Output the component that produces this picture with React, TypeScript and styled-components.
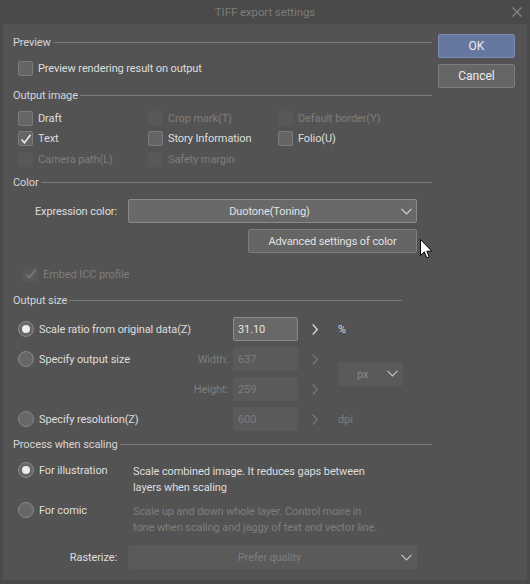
import React from 'react';
import styled, { createGlobalStyle } from 'styled-components';

const GlobalStyle = createGlobalStyle`
  html, body {
    margin: 0;
    padding: 0;
    background: #4a4a4a;
  }
  body {
    font-family: Roboto, 'Liberation Sans', Arial, sans-serif;
    font-size: 11px;
    letter-spacing: -0.1px;
    color: #dedede;
  }
`;

const Window = styled.div`
  width: 530px;
  height: 584px;
  background: #4a4a4a;
  display: flex;
  flex-direction: column;
  position: relative;
  overflow: hidden;
`;

const TitleBar = styled.div`
  height: 24px;
  flex-shrink: 0;
  display: flex;
  align-items: center;
  justify-content: center;
  position: relative;
  color: #7b7b7b;
  font-size: 11.5px;
`;

const CloseBtn = styled.div`
  position: absolute;
  right: 8px;
  top: 7px;
  width: 10px;
  height: 10px;
  display: flex;
`;

const Body = styled.div`
  margin: 0 3px 4px 3px;
  flex: 1;
  min-height: 0;
  background: #535353;
  display: flex;
  padding: 10px 12px 0 10px;
  gap: 6px;
`;

const Main = styled.div`
  width: 419px;
  display: flex;
  flex-direction: column;
`;

const Side = styled.div`
  display: flex;
  flex-direction: column;
  gap: 6px;
`;

const DialogButton = styled.button<{ primary?: boolean }>`
  width: 77px;
  height: 24px;
  border-radius: 2px;
  border: 1px solid ${(p) => (p.primary ? '#7c8cb4' : '#7c7c7c')};
  background: ${(p) => (p.primary ? '#6677a1' : '#666666')};
  color: #ececec;
  font-family: inherit;
  font-size: 12px;
  padding: 0;
`;

const SectionHeader = styled.div<{ lineEnd?: number }>`
  height: 16px;
  flex-shrink: 0;
  display: flex;
  align-items: center;
  color: #d6d6d6;
  width: ${(p) => p.lineEnd ?? 419}px;
  &::after {
    content: '';
    flex: 1;
    height: 1px;
    background: #7a7a7a;
    margin-left: 2px;
  }
`;

const Row = styled.div<{ top?: number }>`
  height: 20px;
  flex-shrink: 0;
  display: flex;
  align-items: center;
  margin-top: ${(p) => p.top ?? 0}px;
`;

const CheckGrid = styled.div`
  display: grid;
  grid-template-columns: 130px 130px 1fr;
  grid-template-rows: 20px 21px 20px;
  padding-left: 5px;
  margin-top: 5px;
`;

const CheckItem = styled.label<{ disabled?: boolean }>`
  display: flex;
  align-items: center;
  gap: 5px;
  color: ${(p) => (p.disabled ? '#7e7e7e' : '#dedede')};
  white-space: nowrap;
`;

const Box = styled.span<{ disabled?: boolean }>`
  width: 15px;
  height: 15px;
  box-sizing: border-box;
  border-radius: 2px;
  border: 1px solid ${(p) => (p.disabled ? '#585858' : '#7b7b7b')};
  background: ${(p) => (p.disabled ? '#585858' : '#656565')};
  display: flex;
  align-items: center;
  justify-content: center;
  flex-shrink: 0;
`;

const Radio = styled.span<{ checked?: boolean }>`
  width: 16px;
  height: 16px;
  box-sizing: border-box;
  border-radius: 50%;
  border: 1px solid #8a8a8a;
  background: #676767;
  display: flex;
  align-items: center;
  justify-content: center;
  flex-shrink: 0;
  &::after {
    content: '';
    display: ${(p) => (p.checked ? 'block' : 'none')};
    width: 8px;
    height: 8px;
    border-radius: 50%;
    background: #ececec;
  }
`;

const FieldRow = styled.div<{ top?: number }>`
  display: flex;
  flex-shrink: 0;
  align-items: center;
  height: 24px;
  margin-top: ${(p) => p.top ?? 0}px;
`;

const FieldLabel = styled.div`
  width: 104px;
  text-align: right;
  margin-right: 11px;
  color: #dedede;
`;

const Select = styled.div<{ disabled?: boolean; width: number }>`
  width: ${(p) => p.width}px;
  height: 24px;
  box-sizing: border-box;
  border-radius: 2px;
  border: 1px solid ${(p) => (p.disabled ? '#5a5a5a' : '#8a8a8a')};
  background: ${(p) => (p.disabled ? '#5a5a5a' : '#696969')};
  color: ${(p) => (p.disabled ? '#7e7e7e' : '#e2e2e2')};
  display: flex;
  align-items: center;
  position: relative;
`;

const SelectText = styled.span`
  flex: 1;
  text-align: center;
  padding-right: 6px;
`;

const SelectChevron = styled.span`
  position: absolute;
  right: 4px;
  top: 8px;
  display: flex;
`;

const PushButton = styled.div`
  width: 169px;
  height: 24px;
  flex-shrink: 0;
  box-sizing: border-box;
  border-radius: 2px;
  border: 1px solid #7e7e7e;
  background: #656565;
  color: #e2e2e2;
  display: flex;
  align-items: center;
  justify-content: center;
  margin: 6px 0 0 235px;
`;

const SizeGrid = styled.div`
  display: grid;
  grid-template-columns: 215px 65px 40px 80px;
  grid-template-rows: repeat(4, 30px);
  padding-left: 5px;
  margin-top: 6px;
  align-items: center;
`;

const RadioLabel = styled.div`
  display: flex;
  align-items: center;
  justify-content: space-between;
  padding-right: 5px;
`;

const RadioText = styled.span<{ disabled?: boolean }>`
  display: flex;
  align-items: center;
  gap: 5px;
  color: ${(p) => (p.disabled ? '#7e7e7e' : '#dedede')};
  white-space: nowrap;
`;

const DimLabel = styled.span`
  color: #7e7e7e;
`;

const NumInput = styled.div<{ disabled?: boolean }>`
  height: 24px;
  box-sizing: border-box;
  border-radius: 2px;
  border: 1px solid ${(p) => (p.disabled ? '#5a5a5a' : '#8a8a8a')};
  background: ${(p) => (p.disabled ? '#5a5a5a' : '#686868')};
  color: ${(p) => (p.disabled ? '#7e7e7e' : '#e2e2e2')};
  display: flex;
  align-items: center;
  padding-left: 4px;
`;

const Spin = styled.div`
  display: flex;
  padding-left: 14px;
`;

const Unit = styled.span<{ disabled?: boolean }>`
  color: ${(p) => (p.disabled ? '#7e7e7e' : '#dedede')};
`;

const UnitSelect = styled.div`
  grid-column: 4;
  grid-row: 2 / span 2;
  width: 65px;
  height: 24px;
  box-sizing: border-box;
  border-radius: 2px;
  background: #5a5a5a;
  color: #8a8a8a;
  display: flex;
  align-items: center;
  position: relative;
  padding-left: 19px;
`;

const ProcessGrid = styled.div`
  display: grid;
  grid-template-columns: 115px 1fr;
  row-gap: 7px;
  padding-left: 5px;
  margin-top: 10px;
`;

const Desc = styled.div<{ disabled?: boolean }>`
  line-height: 15.5px;
  color: ${(p) => (p.disabled ? '#7e7e7e' : '#dedede')};
  padding-top: 2px;
  width: 250px;
`;

const RadioTop = styled.div`
  display: flex;
  align-items: center;
  gap: 5px;
  height: 16px;
`;

const Cursor = styled.svg`
  position: absolute;
  left: 420px;
  top: 239px;
`;

const Check = ({ color }: { color: string }) => (
  <svg width="12" height="12" viewBox="0 0 12 12">
    <path d="M1.5 6.5 L4.5 9.8 L10.5 1.8" fill="none" stroke={color} strokeWidth="1.6" />
  </svg>
);

const ChevronDown = ({ color }: { color: string }) => (
  <svg width="11" height="7" viewBox="0 0 11 7">
    <path d="M0.5 0.8 L5.5 5.8 L10.5 0.8" fill="none" stroke={color} strokeWidth="1.2" />
  </svg>
);

const ChevronRight = ({ color }: { color: string }) => (
  <svg width="6" height="11" viewBox="0 0 6 11">
    <path d="M0.7 0.5 L5.3 5.5 L0.7 10.5" fill="none" stroke={color} strokeWidth="1.2" />
  </svg>
);

const CheckBox: React.FC<{ label: string; checked?: boolean; disabled?: boolean }> = ({
  label,
  checked,
  disabled,
}) => (
  <CheckItem disabled={disabled}>
    <Box disabled={disabled}>{checked && <Check color={disabled ? '#7a7a7a' : '#ececec'} />}</Box>
    {label}
  </CheckItem>
);

export default function App() {
  return (
    <Window>
      <GlobalStyle />
      <TitleBar>
        TIFF export settings
        <CloseBtn>
          <svg width="10" height="10" viewBox="0 0 10 10">
            <path d="M0.5 0.5 L9.5 9.5 M9.5 0.5 L0.5 9.5" stroke="#8a8a8a" strokeWidth="1.1" />
          </svg>
        </CloseBtn>
      </TitleBar>
      <Body>
        <Main>
          <SectionHeader>Preview</SectionHeader>
          <Row top={8} style={{ paddingLeft: 5 }}>
            <CheckBox label="Preview rendering result on output" />
          </Row>

          <SectionHeader style={{ marginTop: 9 }}>Output image</SectionHeader>
          <CheckGrid>
            <CheckBox label="Draft" />
            <CheckBox label="Crop mark(T)" disabled />
            <CheckBox label="Default border(Y)" disabled />
            <CheckBox label="Text" checked />
            <CheckBox label="Story Information" />
            <CheckBox label="Folio(U)" />
            <CheckBox label="Camera path(L)" disabled />
            <CheckBox label="Safety margin" disabled />
          </CheckGrid>

          <SectionHeader style={{ marginTop: 5 }}>Color</SectionHeader>
          <FieldRow top={9}>
            <FieldLabel>Expression color:</FieldLabel>
            <Select width={289}>
              <SelectText>Duotone(Toning)</SelectText>
              <SelectChevron>
                <ChevronDown color="#d4d4d4" />
              </SelectChevron>
            </Select>
          </FieldRow>
          <PushButton>Advanced settings of color</PushButton>
          <Row top={11} style={{ paddingLeft: 10 }}>
            <CheckBox label="Embed ICC profile" checked disabled />
          </Row>

          <SectionHeader lineEnd={389} style={{ marginTop: 8 }}>
            Output size
          </SectionHeader>
          <SizeGrid>
            <RadioLabel>
              <RadioText>
                <Radio checked />
                Scale ratio from original data(Z)
              </RadioText>
            </RadioLabel>
            <NumInput>31.10</NumInput>
            <Spin>
              <ChevronRight color="#dcdcdc" />
            </Spin>
            <Unit>%</Unit>

            <RadioLabel>
              <RadioText>
                <Radio />
                Specify output size
              </RadioText>
              <DimLabel>Width:</DimLabel>
            </RadioLabel>
            <NumInput disabled>637</NumInput>
            <Spin>
              <ChevronRight color="#777" />
            </Spin>
            <UnitSelect>
              px
              <SelectChevron style={{ right: 5, top: 8 }}>
                <ChevronDown color="#c4c4c4" />
              </SelectChevron>
            </UnitSelect>

            <RadioLabel style={{ justifyContent: 'flex-end' }}>
              <DimLabel>Height:</DimLabel>
            </RadioLabel>
            <NumInput disabled>259</NumInput>
            <Spin>
              <ChevronRight color="#777" />
            </Spin>

            <RadioLabel>
              <RadioText>
                <Radio />
                Specify resolution(Z)
              </RadioText>
            </RadioLabel>
            <NumInput disabled>600</NumInput>
            <Spin>
              <ChevronRight color="#777" />
            </Spin>
            <Unit disabled>dpi</Unit>
          </SizeGrid>

          <SectionHeader style={{ marginTop: 2 }}>Process when scaling</SectionHeader>
          <ProcessGrid>
            <RadioTop>
              <Radio checked />
              For illustration
            </RadioTop>
            <Desc>
              Scale combined image. It reduces gaps between layers when scaling
            </Desc>
            <RadioTop>
              <Radio />
              For comic
            </RadioTop>
            <Desc disabled>
              Scale up and down whole layer. Control moire in tone when scaling and jaggy of text and
              vector line.
            </Desc>
          </ProcessGrid>
          <FieldRow top={10}>
            <FieldLabel>Rasterize:</FieldLabel>
            <Select width={289} disabled>
              <SelectText>Prefer quality</SelectText>
              <SelectChevron>
                <ChevronDown color="#c4c4c4" />
              </SelectChevron>
            </Select>
          </FieldRow>
        </Main>
        <Side>
          <DialogButton primary>OK</DialogButton>
          <DialogButton>Cancel</DialogButton>
        </Side>
      </Body>
      <Cursor width="13" height="21" viewBox="0 0 13 21">
        <path
          d="M0.5 0.5 L0.5 16.5 L4.3 12.9 L6.8 18.8 L9.2 17.8 L6.8 12.2 L11.8 12.2 Z"
          fill="#ffffff"
          stroke="#000000"
          strokeWidth="1"
          strokeLinejoin="miter"
        />
      </Cursor>
    </Window>
  );
}
